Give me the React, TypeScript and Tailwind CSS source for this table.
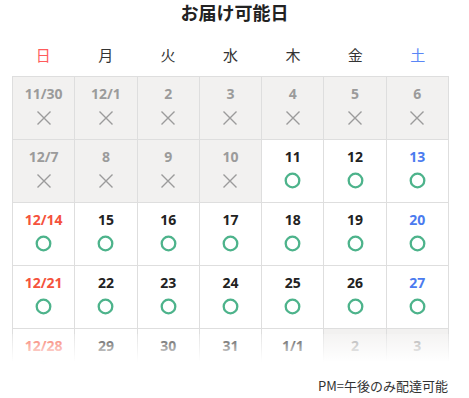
import React from "react";

type Cell = { label: string; ok: boolean; day: number };

const rows: Cell[][] = [
  ["11/30", "12/1", "2", "3", "4", "5", "6"].map((l, i) => ({ label: l, ok: false, day: i })),
  ["12/7", "8", "9", "10", "11", "12", "13"].map((l, i) => ({ label: l, ok: i >= 4, day: i })),
  ["12/14", "15", "16", "17", "18", "19", "20"].map((l, i) => ({ label: l, ok: true, day: i })),
  ["12/21", "22", "23", "24", "25", "26", "27"].map((l, i) => ({ label: l, ok: true, day: i })),
  ["12/28", "29", "30", "31", "1/1", "2", "3"].map((l, i) => ({ label: l, ok: i <= 4, day: i })),
];

const weekdays = ["日", "月", "火", "水", "木", "金", "土"];

function Cross() {
  return (
    <svg width="16" height="16" viewBox="0 0 16 16">
      <path d="M1.5 1.5 L14.5 14.5 M14.5 1.5 L1.5 14.5" stroke="#9b9b9b" strokeWidth="1.4" fill="none" />
    </svg>
  );
}

function Circle() {
  return (
    <svg width="17" height="17" viewBox="0 0 17 17">
      <circle cx="8.5" cy="8.5" r="6.8" stroke="#4db38b" strokeWidth="2.3" fill="none" />
    </svg>
  );
}

export default function App() {
  return (
    <div
      className="w-[469px] h-[398px] bg-white"
      style={{ fontFamily: '"Open Sans", "Noto Sans CJK JP", sans-serif' }}
    >
      <div className="h-[24px] flex items-center justify-center text-[18px] font-bold text-[#222]" style={{ fontFamily: '"Noto Sans CJK JP", sans-serif' }}>
        お届け可能日
      </div>
      <div className="mt-[19px] ml-[12px] w-[437px] grid grid-cols-7 h-[24px] items-center text-[15px]" style={{ fontFamily: '"Noto Sans CJK JP", sans-serif' }}>
        {weekdays.map((w, i) => (
          <div
            key={w}
            className={
              "text-center " +
              (i === 0 ? "text-[#ff5c5c]" : i === 6 ? "text-[#5a86f6]" : "text-[#333]")
            }
          >
            {w}
          </div>
        ))}
      </div>
      <div className="relative mt-[9px] ml-[12px] w-[437px] h-[286px] overflow-hidden">
        <div className="grid grid-cols-7 border-l border-t border-[#dedede]">
          {rows.flat().map((c, idx) => (
            <div
              key={idx}
              className={
                "h-[63px] border-r border-b border-[#dedede] flex flex-col items-center " +
                (c.ok ? "bg-white" : "bg-[#f2f1f0]")
              }
            >
              <div
                className={
                  "mt-[7px] h-[20px] leading-[20px] text-[14px] font-bold " +
                  (!c.ok
                    ? "text-[#9b9b9b]"
                    : c.day === 0
                    ? "text-[#f5523c]"
                    : c.day === 6
                    ? "text-[#4b7bef]"
                    : "text-[#222]")
                }
              >
                {c.label}
              </div>
              <div className="mt-[5px] flex items-center justify-center h-[17px]">
                {c.ok ? <Circle /> : <Cross />}
              </div>
            </div>
          ))}
        </div>
        <div className="absolute left-0 right-0 top-[258px] h-[28px] bg-gradient-to-b from-white/20 to-white" />
      </div>
      <div className="mt-[14px] mr-[21px] text-right text-[13px] leading-[20px] text-[#333]" style={{ fontFamily: '"Noto Sans CJK JP", sans-serif' }}>
        PM=午後のみ配達可能
      </div>
    </div>
  );
}
